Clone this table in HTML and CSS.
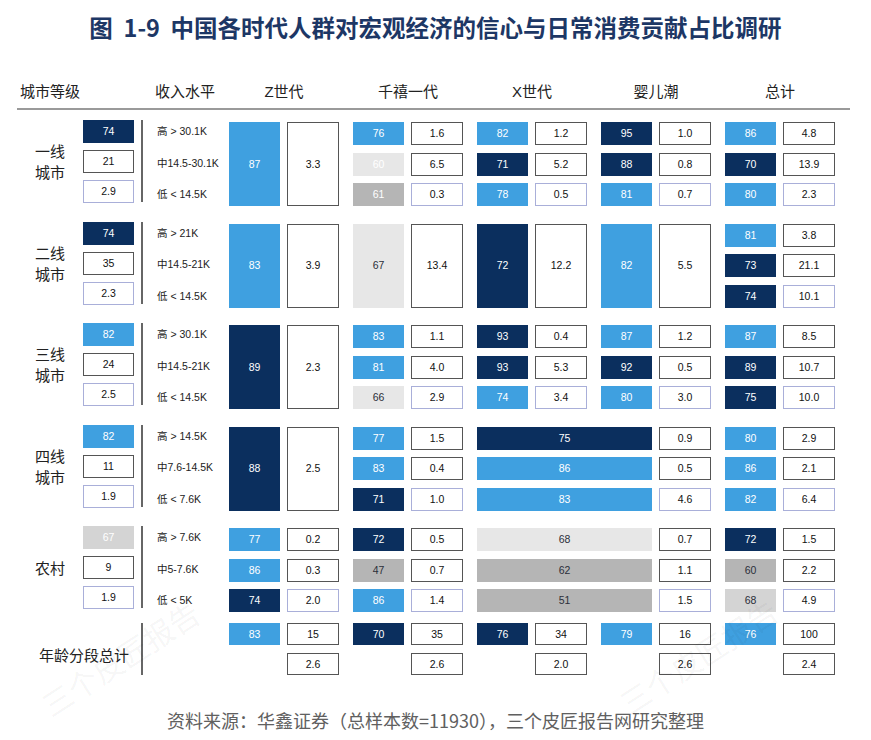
FILE: index.html
```html
<!DOCTYPE html>
<html lang="zh-CN">
<head>
<meta charset="utf-8">
<title>中国各时代人群对宏观经济的信心与日常消费贡献占比调研</title>
<link rel="stylesheet" href="styles.css">
</head>
<body>
<h1 class="title">图  1-9  中国各时代人群对宏观经济的信心与日常消费贡献占比调研</h1>

<div class="head">
  <div class="h-city">城市等级</div>
  <div class="h-inc">收入水平</div>
  <div class="h-gen">Z世代</div>
  <div class="h-gen">千禧一代</div>
  <div class="h-gen">X世代</div>
  <div class="h-gen">婴儿潮</div>
  <div class="h-gen">总计</div>
</div>
<div class="rule"></div>

<div class="groups">
  <!-- 一线城市 -->
  <div class="group">
    <div class="city">一线<br>城市</div>
    <div class="left"><div class="b n">74</div><div class="b w">21</div><div class="b w lo">2.9</div></div>
    <div class="divider"></div>
    <div class="income"><div>高 &gt; 30.1K</div><div>中14.5-30.1K</div><div>低 &lt; 14.5K</div></div>
    <div class="gens">
      <div class="gen"><div class="b l tall">87</div><div class="b w tall">3.3</div></div>
      <div class="gen">
        <div class="b l">76</div><div class="b w">1.6</div>
        <div class="b g1">60</div><div class="b w">6.5</div>
        <div class="b g2">61</div><div class="b w lo">0.3</div>
      </div>
      <div class="gen">
        <div class="b l">82</div><div class="b w">1.2</div>
        <div class="b n">71</div><div class="b w">5.2</div>
        <div class="b l">78</div><div class="b w lo">0.5</div>
      </div>
      <div class="gen">
        <div class="b n">95</div><div class="b w">1.0</div>
        <div class="b n">88</div><div class="b w">0.8</div>
        <div class="b l">81</div><div class="b w lo">0.7</div>
      </div>
      <div class="gen">
        <div class="b l">86</div><div class="b w">4.8</div>
        <div class="b n">70</div><div class="b w">13.9</div>
        <div class="b l">80</div><div class="b w lo">2.3</div>
      </div>
    </div>
  </div>

  <!-- 二线城市 -->
  <div class="group">
    <div class="city">二线<br>城市</div>
    <div class="left"><div class="b n">74</div><div class="b w">35</div><div class="b w lo">2.3</div></div>
    <div class="divider"></div>
    <div class="income"><div>高 &gt; 21K</div><div>中14.5-21K</div><div>低 &lt; 14.5K</div></div>
    <div class="gens">
      <div class="gen"><div class="b l tall">83</div><div class="b w tall">3.9</div></div>
      <div class="gen"><div class="b g1 dk tall">67</div><div class="b w tall">13.4</div></div>
      <div class="gen"><div class="b n tall">72</div><div class="b w tall">12.2</div></div>
      <div class="gen"><div class="b l tall">82</div><div class="b w tall">5.5</div></div>
      <div class="gen">
        <div class="b l">81</div><div class="b w">3.8</div>
        <div class="b n">73</div><div class="b w">21.1</div>
        <div class="b n">74</div><div class="b w lo">10.1</div>
      </div>
    </div>
  </div>

  <!-- 三线城市 -->
  <div class="group">
    <div class="city">三线<br>城市</div>
    <div class="left"><div class="b l">82</div><div class="b w">24</div><div class="b w lo">2.5</div></div>
    <div class="divider"></div>
    <div class="income"><div>高 &gt; 30.1K</div><div>中14.5-21K</div><div>低 &lt; 14.5K</div></div>
    <div class="gens">
      <div class="gen"><div class="b n tall">89</div><div class="b w tall">2.3</div></div>
      <div class="gen">
        <div class="b l">83</div><div class="b w">1.1</div>
        <div class="b l">81</div><div class="b w">4.0</div>
        <div class="b g1 dk">66</div><div class="b w lo">2.9</div>
      </div>
      <div class="gen">
        <div class="b n">93</div><div class="b w">0.4</div>
        <div class="b n">93</div><div class="b w">5.3</div>
        <div class="b l">74</div><div class="b w lo">3.4</div>
      </div>
      <div class="gen">
        <div class="b l">87</div><div class="b w">1.2</div>
        <div class="b n">92</div><div class="b w">0.5</div>
        <div class="b l">80</div><div class="b w lo">3.0</div>
      </div>
      <div class="gen">
        <div class="b l">87</div><div class="b w">8.5</div>
        <div class="b n">89</div><div class="b w">10.7</div>
        <div class="b n">75</div><div class="b w lo">10.0</div>
      </div>
    </div>
  </div>

  <!-- 四线城市 -->
  <div class="group">
    <div class="city">四线<br>城市</div>
    <div class="left"><div class="b l">82</div><div class="b w">11</div><div class="b w lo">1.9</div></div>
    <div class="divider"></div>
    <div class="income"><div>高 &gt; 14.5K</div><div>中7.6-14.5K</div><div>低 &lt; 7.6K</div></div>
    <div class="gens">
      <div class="gen"><div class="b n tall">88</div><div class="b w tall">2.5</div></div>
      <div class="gen">
        <div class="b l">77</div><div class="b w">1.5</div>
        <div class="b l">83</div><div class="b w">0.4</div>
        <div class="b n">71</div><div class="b w lo">1.0</div>
      </div>
      <div class="gen merge">
        <div class="b n">75</div><div class="b w">0.9</div>
        <div class="b l">86</div><div class="b w">0.5</div>
        <div class="b l">83</div><div class="b w lo">4.6</div>
      </div>
      <div class="gen">
        <div class="b l">80</div><div class="b w">2.9</div>
        <div class="b l">86</div><div class="b w">2.1</div>
        <div class="b l">82</div><div class="b w lo">6.4</div>
      </div>
    </div>
  </div>

  <!-- 农村 -->
  <div class="group rural">
    <div class="city">农村</div>
    <div class="left"><div class="b g3">67</div><div class="b w">9</div><div class="b w lo">1.9</div></div>
    <div class="divider"></div>
    <div class="income"><div>高 &gt; 7.6K</div><div>中5-7.6K</div><div>低 &lt; 5K</div></div>
    <div class="gens">
      <div class="gen">
        <div class="b l">77</div><div class="b w">0.2</div>
        <div class="b l">86</div><div class="b w">0.3</div>
        <div class="b n">74</div><div class="b w lo">2.0</div>
      </div>
      <div class="gen">
        <div class="b n">72</div><div class="b w">0.5</div>
        <div class="b g2 dk">47</div><div class="b w">0.7</div>
        <div class="b l">86</div><div class="b w lo">1.4</div>
      </div>
      <div class="gen merge">
        <div class="b g1 dk">68</div><div class="b w">0.7</div>
        <div class="b g2 dk">62</div><div class="b w">1.1</div>
        <div class="b g2 dk">51</div><div class="b w lo">1.5</div>
      </div>
      <div class="gen">
        <div class="b n">72</div><div class="b w">1.5</div>
        <div class="b g2 dk">60</div><div class="b w">2.2</div>
        <div class="b g3 dk">68</div><div class="b w lo">4.9</div>
      </div>
    </div>
  </div>

  <!-- 年龄分段总计 -->
  <div class="group age">
    <div class="age-label">年龄分段总计</div>
    <div class="divider age-div"></div>
    <div class="gens">
      <div class="gen two"><div class="b l">83</div><div class="b w">15</div><div></div><div class="b w">2.6</div></div>
      <div class="gen two"><div class="b n">70</div><div class="b w">35</div><div></div><div class="b w">2.6</div></div>
      <div class="gen two"><div class="b n">76</div><div class="b w">34</div><div></div><div class="b w">2.0</div></div>
      <div class="gen two"><div class="b l">79</div><div class="b w">16</div><div></div><div class="b w">2.6</div></div>
      <div class="gen two"><div class="b l">76</div><div class="b w">100</div><div></div><div class="b w">2.4</div></div>
    </div>
  </div>
</div>

<p class="source">资料来源：华鑫证券（总样本数=11930），三个皮匠报告网研究整理</p>

<div class="wm wm-left">三个皮匠报告</div>
<div class="wm wm-right">三个皮匠报告</div>
</body>
</html>
```

FILE: styles.css
```css
* {
  box-sizing: border-box;
  margin: 0;
  padding: 0;
}

body {
  width: 871px;
  height: 740px;
  background: #fff;
  font-family: "Liberation Sans", "Noto Sans CJK SC", sans-serif;
  color: #222;
  overflow: hidden;
  position: relative;
}

.title {
  font-family: "Noto Sans CJK SC", sans-serif;
  font-weight: 700;
  font-size: 23.5px;
  line-height: 34px;
  padding-top: 10px;
  text-align: center;
  color: #1d3765;
  white-space: pre;
}

.head {
  display: flex;
  margin-top: 38px;
  height: 20px;
  font-size: 15px;
  line-height: 20px;
  color: #222;
}

.h-city {
  width: 155px;
  padding-left: 20px;
}

.h-inc {
  width: 74px;
}

.h-gen {
  width: 110px;
  margin-right: 14px;
  text-align: center;
}

.rule {
  margin: 6px 0 0 17px;
  width: 833px;
  height: 2px;
  background: #9a9a9a;
}

.groups {
  padding-top: 12px;
}

.group {
  display: flex;
  height: 84px;
  margin-bottom: 17.5px;
}

.group.rural {
  margin-bottom: 11px;
}

.city {
  width: 83px;
  padding-left: 35px;
  padding-bottom: 4px;
  display: flex;
  align-items: center;
  font-size: 15px;
  line-height: 21px;
  color: #222;
}

.left {
  width: 51px;
  display: flex;
  flex-direction: column;
  justify-content: space-between;
  padding-bottom: 3px;
  margin-top: -2px;
}

.left .b {
  height: 23px;
}

.divider {
  width: 1.5px;
  background: #666;
  margin: -2px 14.5px 4px 7px;
}

.income {
  width: 72px;
  display: flex;
  flex-direction: column;
  justify-content: space-between;
  font-size: 10.5px;
  color: #222;
  margin-top: -2px;
}

.income div {
  line-height: 23px;
  white-space: nowrap;
}

.gens {
  display: flex;
  gap: 14px;
}

.gen {
  display: grid;
  grid-template-columns: 51px 52px;
  grid-template-rows: repeat(3, 23px);
  column-gap: 7px;
  row-gap: 7.5px;
}

.gen.merge {
  grid-template-columns: 175px 52px;
}

.gen.two {
  grid-template-rows: 22px 22px;
  row-gap: 8px;
}

.tall {
  grid-row: 1 / 4;
}

.b {
  display: flex;
  align-items: center;
  justify-content: center;
  font-size: 10.5px;
  line-height: 1;
}

.w {
  background: #fff;
  border: 1.5px solid #555;
  color: #111;
}

.w.lo {
  border-color: #a9afd9;
}

.n {
  background: #0b2f5e;
  color: #fff;
}

.l {
  background: #3fa0e0;
  color: #fff;
}

.g1 {
  background: #e7e7e7;
  color: #fff;
}

.g2 {
  background: #b5b5b5;
  color: #fff;
}

.g3 {
  background: #d4d4d4;
  color: #fff;
}

.dk {
  color: #2b2f3a;
}

.group.age {
  height: 52px;
  margin-bottom: 0;
}

.age-label {
  width: 141px;
  padding-left: 39px;
  padding-top: 10px;
  display: flex;
  align-items: center;
  font-size: 15px;
  color: #222;
}

.divider.age-div {
  margin: 0 86.5px 0 0;
}

.source {
  margin-top: 33px;
  text-align: center;
  font-family: "Noto Sans CJK SC", sans-serif;
  font-size: 18px;
  line-height: 24px;
  color: #606060;
}

.wm {
  position: absolute;
  font-family: "Noto Sans CJK SC", sans-serif;
  font-size: 30px;
  line-height: 40px;
  width: 190px;
  text-align: center;
  color: rgba(0, 0, 0, 0.05);
  white-space: nowrap;
  transform: rotate(-33deg);
  pointer-events: none;
}

.wm-left {
  left: 25px;
  top: 638px;
}

.wm-right {
  left: 603px;
  top: 636px;
}
```
